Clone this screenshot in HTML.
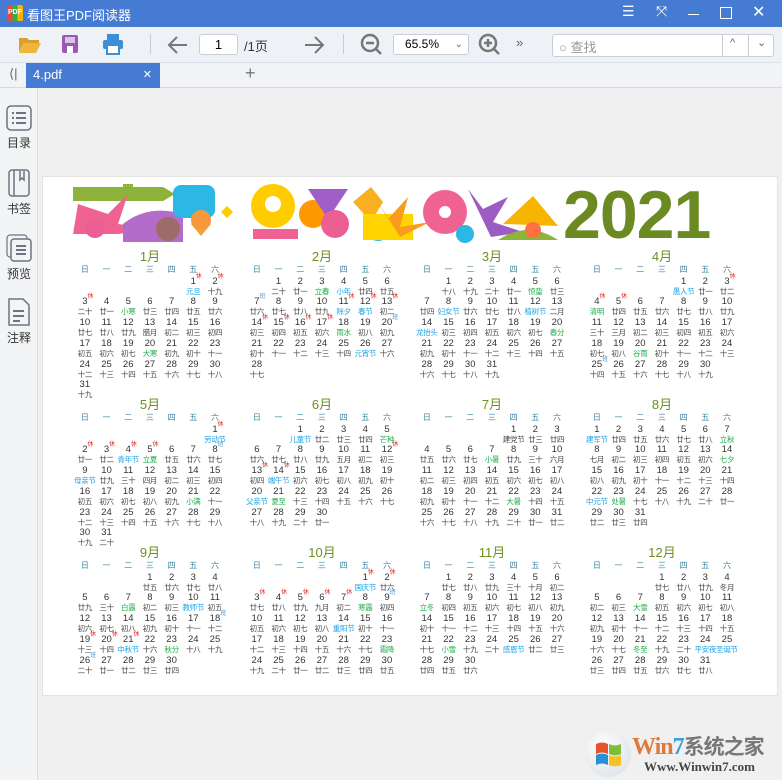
<!DOCTYPE html>
<html><head><meta charset="utf-8"><style>
*{margin:0;padding:0;box-sizing:border-box}
body{width:782px;height:780px;overflow:hidden;background:#f0f0f0;font-family:"Liberation Sans","Noto Sans CJK SC",sans-serif;position:relative}
.tb{position:absolute;left:0;top:0;width:782px;height:27px;background:#467bd3;color:#fff;font-size:14px}
.tool{position:absolute;left:0;top:27px;width:782px;height:36px;background:#eef2f7;border-bottom:1px solid #dde2ea}
.tabs{position:absolute;left:0;top:63px;width:782px;height:25px;background:#f1f3f6;border-bottom:1px solid #d6dae0}
.side{position:absolute;left:0;top:88px;width:38px;height:692px;background:#f3f4f6;border-right:1px solid #d9dce1}
.side div{position:absolute;left:0;width:38px;text-align:center;font-size:12px;color:#333}
.page{position:absolute;left:42px;top:176px;width:736px;height:520px;background:#fff;border:1px solid #e2e2e2}
.m{position:absolute;width:152px;font-size:9.5px;color:#333}
.m h3{height:14px;line-height:14px;text-align:center;font-weight:normal;font-size:13px;color:#6f8f22}
.w,.g{display:grid;grid-template-columns:repeat(7,21.7px)}
.w span{height:12px;line-height:12px;text-align:center;color:#3a86a3;font-size:8px}
.g i{font-style:normal;text-align:center;height:20.8px;line-height:9px;padding-top:0.5px;position:relative}
.g i b,.g i u,.g i em{display:block;font-weight:normal;text-decoration:none;font-style:normal;font-size:7.5px;line-height:11.5px;color:#444;white-space:nowrap;letter-spacing:-.3px}
.g i u{color:#1aa3e8}.g i em{color:#1fae4a}
.g i sup{display:inline-block;width:0;overflow:visible;vertical-align:top;margin-top:-3px;font-size:6px;color:#e02020;line-height:6px;text-align:left}
.g i sup.c{color:#4a9ad8}
.ic{position:absolute;top:34px}
</style></head><body>
<div class="tb">
<div style="position:absolute;left:7px;top:5px;width:16px;height:16px;background:linear-gradient(90deg,#e94b3c 33%,#2fae4e 33% 66%,#f6b400 66%);border-radius:2px;font-size:7px;color:#fff;text-align:center;line-height:16px;font-weight:bold">PDF</div>
<div style="position:absolute;left:27px;top:5px;font-size:13px">看图王PDF阅读器</div>
<div style="position:absolute;left:622px;top:3px;font-size:14px">☰</div>
<div style="position:absolute;left:656px;top:3px;font-size:14px">⤧</div>
<div style="position:absolute;left:688px;top:14px;width:11px;height:1px;background:#fff"></div>
<div style="position:absolute;left:720px;top:7px;width:12px;height:12px;border:1.5px solid #fff"></div>
<div style="position:absolute;left:752px;top:2px;font-size:16px">✕</div>
</div>
<div class="tool">
<svg class="ic" style="left:18px;top:7px" width="24" height="20"><path d="M1 4h8l2 2h10v3H6L1 18z" fill="#d8a02a"/><path d="M6 9h17l-5 10H1z" fill="#f0b63a"/></svg>
<svg class="ic" style="left:61px;top:7px" width="18" height="20"><rect x="1" y="1" width="16" height="18" rx="2" fill="#9b59b6"/><rect x="4" y="3" width="10" height="6" fill="#d9c5e3"/><rect x="6" y="12" width="6" height="7" fill="#fff"/></svg>
<svg class="ic" style="left:102px;top:6px" width="22" height="22"><rect x="5" y="1" width="12" height="6" fill="#3b8fd6"/><rect x="1" y="7" width="20" height="9" rx="2" fill="#3b8fd6"/><rect x="5" y="12" width="12" height="9" fill="#fff" stroke="#3b8fd6" stroke-width="2"/></svg>
<div style="position:absolute;left:150px;top:7px;width:1px;height:20px;background:#ccc"></div>
<svg class="ic" style="left:167px;top:8px" width="22" height="20"><path d="M20 10H3M10 2 2 10l8 8" stroke="#777" stroke-width="2" fill="none"/></svg>
<div style="position:absolute;left:199px;top:7px;width:39px;height:21px;border:1px solid #c9ced6;border-radius:3px;background:#fff;text-align:center;line-height:19px;font-size:13px">1</div>
<div style="position:absolute;left:244px;top:9px;font-size:13px;color:#333">/1页</div>
<svg class="ic" style="left:303px;top:8px" width="22" height="20"><path d="M2 10h17M12 2l8 8-8 8" stroke="#777" stroke-width="2" fill="none"/></svg>
<div style="position:absolute;top:7px;width:1px;height:20px;background:#ccc;left:343px"></div>
<svg class="ic" style="left:360px;top:6px" width="24" height="24"><circle cx="10" cy="10" r="8" stroke="#777" stroke-width="2.5" fill="none"/><path d="M6 10h8M16 16l5 5" stroke="#777" stroke-width="2.5"/></svg>
<div style="position:absolute;left:393px;top:7px;width:76px;height:21px;border:1px solid #c9ced6;border-radius:3px;background:#fff;font-size:12px;line-height:19px;padding-left:11px">65.5% <span style="position:absolute;right:5px;color:#666;font-size:10px">⌄</span></div>
<svg class="ic" style="left:478px;top:6px" width="24" height="24"><circle cx="10" cy="10" r="8" stroke="#777" stroke-width="2.5" fill="none"/><path d="M6 10h8M10 6v8M16 16l5 5" stroke="#777" stroke-width="2.5"/></svg>
<div style="position:absolute;left:516px;top:8px;font-size:13px;color:#666">»</div>
<div style="position:absolute;left:552px;top:7px;width:222px;height:23px;border:1px solid #c9ced6;border-radius:3px;background:#fff">
<span style="position:absolute;left:6px;top:2px;font-size:13px;color:#999">○ 查找</span>
<span style="position:absolute;left:169px;top:0;width:1px;height:21px;background:#ccc"></span>
<span style="position:absolute;left:177px;top:2px;font-size:11px;color:#666">^</span>
<span style="position:absolute;left:195px;top:0;width:1px;height:21px;background:#ccc"></span>
<span style="position:absolute;left:204px;top:1px;font-size:11px;color:#666">⌄</span>
</div>
</div>
<div class="tabs">
<div style="position:absolute;left:9px;top:3px;font-size:13px;color:#666">⟨|</div>
<div style="position:absolute;left:26px;top:0;width:134px;height:25px;background:#467bd3;color:#fff;font-size:13px;line-height:24px;padding-left:7px">4.pdf<span style="position:absolute;right:8px;font-size:11px">✕</span></div>
<div style="position:absolute;left:245px;top:0;font-size:18px;color:#777">+</div>
</div>
<div class="side">
<div style="top:17px"><svg width="26" height="26"><rect x="1" y="1" width="24" height="24" rx="4" fill="none" stroke="#6b7480" stroke-width="1.5"/><path d="M6 8h2M10 8h10M6 13h2M10 13h10M6 18h2M10 18h10" stroke="#6b7480" stroke-width="2"/></svg><br>目录</div>
<div style="top:81px"><svg width="26" height="28"><rect x="3" y="1" width="20" height="26" rx="3" fill="none" stroke="#6b7480" stroke-width="1.5"/><path d="M8 1v26M14 2v9l2-2 2 2V2" stroke="#6b7480" stroke-width="1.5" fill="none"/></svg><br>书签</div>
<div style="top:146px"><svg width="26" height="28"><rect x="1" y="1" width="20" height="22" rx="3" fill="none" stroke="#6b7480" stroke-width="1.2"/><rect x="5" y="5" width="20" height="22" rx="3" fill="#f3f4f6" stroke="#6b7480" stroke-width="1.5"/><path d="M10 12h10M10 16h10M10 20h10" stroke="#6b7480" stroke-width="2"/></svg><br>预览</div>
<div style="top:210px"><svg width="26" height="28"><path d="M3 1h14l6 6v20H3z" fill="none" stroke="#6b7480" stroke-width="1.5"/><path d="M7 13h11M7 18h11M7 23h7" stroke="#6b7480" stroke-width="2"/></svg><br>注释</div>
</div>
<div class="page"></div>
<svg style="position:absolute;left:73px;top:184px" width="490" height="60">
<path d="M0 3h50v-3h10v3h30l12 7-12 7H0z" fill="#8db33a"/>
<path d="M5 20l30 10 20-20-10 30 40 5-40 5H0z" fill="#f06292"/>
<circle cx="22" cy="44" r="10" fill="#ec5f95"/>
<path d="M50 40 Q75 20 110 30 L110 58 H50z" fill="#b36cc9"/>
<rect x="100" y="1" width="42" height="33" rx="8" fill="#2bb8e5"/>
<circle cx="95" cy="45" r="12" fill="#8d6a2a" opacity=".6"/>
<path d="M118 40 l10-12 10 12-10 12z" fill="#f5a03a"/>
<circle cx="128" cy="36" r="10" fill="#f7993a"/>
<path d="M148 28l6-6 6 6-6 6z" fill="#ffcc00"/>
<circle cx="200" cy="22" r="22" fill="#ffcc00"/><circle cx="200" cy="20" r="8" fill="#fff"/>
<path d="M180 45h45v10h-45z" fill="#f06292"/>
<circle cx="240" cy="30" r="14" fill="#ff9900"/>
<path d="M235 5 l40 0 -20 30z" fill="#a05ec9"/>
<circle cx="262" cy="40" r="14" fill="#ec5f95"/>
<path d="M280 18l18-15 12 15-12 20z" fill="#f8b020"/>
<circle cx="305" cy="45" r="12" fill="#2bb8e5"/>
<path d="M290 30 h50 v26 h-50z" fill="#ffd400"/>
<path d="M300 10 l15 25 20-22-8 30 30-5-30 15z" fill="#fa9c1b"/>
<circle cx="372" cy="28" r="22" fill="#f06292"/><circle cx="372" cy="28" r="6" fill="#fff"/>
<path d="M395 5 l15 20 25-12-15 25 30 10-32 5z" fill="#9c5cc4"/>
<circle cx="392" cy="50" r="9" fill="#2bb8e5"/>
<path d="M430 40 l30-28 25 30z" fill="#f7b500"/>
<path d="M425 56 q30-20 60 0z" fill="#8db33a"/>
<circle cx="460" cy="46" r="8" fill="#ff7043"/>
</svg>
<div style="position:absolute;left:563px;top:176px;font-size:68px;font-weight:bold;color:#6b8a22;letter-spacing:-1px">2021</div>

<div class="m" style="left:74px;top:250px"><h3>1月</h3><div class="w"><span>日</span><span>一</span><span>二</span><span>三</span><span>四</span><span>五</span><span>六</span></div><div class="g">
<i style="grid-column-start:6">1<sup>休</sup><u>元旦</u></i><i>2<sup>休</sup><b>十九</b></i><i>3<sup>休</sup><b>二十</b></i><i>4<b>廿一</b></i><i>5<em>小寒</em></i><i>6<b>廿三</b></i><i>7<b>廿四</b></i><i>8<b>廿五</b></i><i>9<b>廿六</b></i><i>10<b>廿七</b></i><i>11<b>廿八</b></i><i>12<b>廿九</b></i><i>13<b>腊月</b></i><i>14<b>初二</b></i><i>15<b>初三</b></i><i>16<b>初四</b></i><i>17<b>初五</b></i><i>18<b>初六</b></i><i>19<b>初七</b></i><i>20<em>大寒</em></i><i>21<b>初九</b></i><i>22<b>初十</b></i><i>23<b>十一</b></i><i>24<b>十二</b></i><i>25<b>十三</b></i><i>26<b>十四</b></i><i>27<b>十五</b></i><i>28<b>十六</b></i><i>29<b>十七</b></i><i>30<b>十八</b></i><i>31<b>十九</b></i></div></div>

<div class="m" style="left:246px;top:250px"><h3>2月</h3><div class="w"><span>日</span><span>一</span><span>二</span><span>三</span><span>四</span><span>五</span><span>六</span></div><div class="g">
<i style="grid-column-start:2">1<b>二十</b></i><i>2<b>廿一</b></i><i>3<em>立春</em></i><i>4<u>小年</u></i><i>5<b>廿四</b></i><i>6<b>廿五</b></i><i>7<sup class="c">班</sup><b>廿六</b></i><i>8<b>廿七</b></i><i>9<b>廿八</b></i><i>10<b>廿九</b></i><i>11<sup>休</sup><u>除夕</u></i><i>12<sup>休</sup><u>春节</u></i><i>13<sup>休</sup><b>初二</b></i><i>14<sup>休</sup><b>初三</b></i><i>15<sup>休</sup><b>初四</b></i><i>16<sup>休</sup><b>初五</b></i><i>17<sup>休</sup><b>初六</b></i><i>18<em>雨水</em></i><i>19<b>初八</b></i><i>20<sup class="c">班</sup><b>初九</b></i><i>21<b>初十</b></i><i>22<b>十一</b></i><i>23<b>十二</b></i><i>24<b>十三</b></i><i>25<b>十四</b></i><i>26<u>元宵节</u></i><i>27<b>十六</b></i><i>28<b>十七</b></i></div></div>

<div class="m" style="left:416px;top:250px"><h3>3月</h3><div class="w"><span>日</span><span>一</span><span>二</span><span>三</span><span>四</span><span>五</span><span>六</span></div><div class="g">
<i style="grid-column-start:2">1<b>十八</b></i><i>2<b>十九</b></i><i>3<b>二十</b></i><i>4<b>廿一</b></i><i>5<em>惊蛰</em></i><i>6<b>廿三</b></i><i>7<b>廿四</b></i><i>8<u>妇女节</u></i><i>9<b>廿六</b></i><i>10<b>廿七</b></i><i>11<b>廿八</b></i><i>12<u>植树节</u></i><i>13<b>二月</b></i><i>14<u>龙抬头</u></i><i>15<b>初三</b></i><i>16<b>初四</b></i><i>17<b>初五</b></i><i>18<b>初六</b></i><i>19<b>初七</b></i><i>20<em>春分</em></i><i>21<b>初九</b></i><i>22<b>初十</b></i><i>23<b>十一</b></i><i>24<b>十二</b></i><i>25<b>十三</b></i><i>26<b>十四</b></i><i>27<b>十五</b></i><i>28<b>十六</b></i><i>29<b>十七</b></i><i>30<b>十八</b></i><i>31<b>十九</b></i></div></div>

<div class="m" style="left:586px;top:250px"><h3>4月</h3><div class="w"><span>日</span><span>一</span><span>二</span><span>三</span><span>四</span><span>五</span><span>六</span></div><div class="g">
<i style="grid-column-start:5">1<u>愚人节</u></i><i>2<b>廿一</b></i><i>3<sup>休</sup><b>廿二</b></i><i>4<sup>休</sup><em>清明</em></i><i>5<sup>休</sup><b>廿四</b></i><i>6<b>廿五</b></i><i>7<b>廿六</b></i><i>8<b>廿七</b></i><i>9<b>廿八</b></i><i>10<b>廿九</b></i><i>11<b>三十</b></i><i>12<b>三月</b></i><i>13<b>初二</b></i><i>14<b>初三</b></i><i>15<b>初四</b></i><i>16<b>初五</b></i><i>17<b>初六</b></i><i>18<b>初七</b></i><i>19<b>初八</b></i><i>20<em>谷雨</em></i><i>21<b>初十</b></i><i>22<b>十一</b></i><i>23<b>十二</b></i><i>24<b>十三</b></i><i>25<sup class="c">班</sup><b>十四</b></i><i>26<b>十五</b></i><i>27<b>十六</b></i><i>28<b>十七</b></i><i>29<b>十八</b></i><i>30<b>十九</b></i></div></div>

<div class="m" style="left:74px;top:398px"><h3>5月</h3><div class="w"><span>日</span><span>一</span><span>二</span><span>三</span><span>四</span><span>五</span><span>六</span></div><div class="g">
<i style="grid-column-start:7">1<sup>休</sup><u>劳动节</u></i><i>2<sup>休</sup><b>廿一</b></i><i>3<sup>休</sup><b>廿二</b></i><i>4<sup>休</sup><u>青年节</u></i><i>5<sup>休</sup><em>立夏</em></i><i>6<b>廿五</b></i><i>7<b>廿六</b></i><i>8<sup class="c">班</sup><b>廿七</b></i><i>9<u>母亲节</u></i><i>10<b>廿九</b></i><i>11<b>三十</b></i><i>12<b>四月</b></i><i>13<b>初二</b></i><i>14<b>初三</b></i><i>15<b>初四</b></i><i>16<b>初五</b></i><i>17<b>初六</b></i><i>18<b>初七</b></i><i>19<b>初八</b></i><i>20<b>初九</b></i><i>21<em>小满</em></i><i>22<b>十一</b></i><i>23<b>十二</b></i><i>24<b>十三</b></i><i>25<b>十四</b></i><i>26<b>十五</b></i><i>27<b>十六</b></i><i>28<b>十七</b></i><i>29<b>十八</b></i><i>30<b>十九</b></i><i>31<b>二十</b></i></div></div>

<div class="m" style="left:246px;top:398px"><h3>6月</h3><div class="w"><span>日</span><span>一</span><span>二</span><span>三</span><span>四</span><span>五</span><span>六</span></div><div class="g">
<i style="grid-column-start:3">1<u>儿童节</u></i><i>2<b>廿二</b></i><i>3<b>廿三</b></i><i>4<b>廿四</b></i><i>5<em>芒种</em></i><i>6<b>廿六</b></i><i>7<b>廿七</b></i><i>8<b>廿八</b></i><i>9<b>廿九</b></i><i>10<b>五月</b></i><i>11<b>初二</b></i><i>12<sup>休</sup><b>初三</b></i><i>13<sup>休</sup><b>初四</b></i><i>14<sup>休</sup><u>端午节</u></i><i>15<b>初六</b></i><i>16<b>初七</b></i><i>17<b>初八</b></i><i>18<b>初九</b></i><i>19<b>初十</b></i><i>20<u>父亲节</u></i><i>21<em>夏至</em></i><i>22<b>十三</b></i><i>23<b>十四</b></i><i>24<b>十五</b></i><i>25<b>十六</b></i><i>26<b>十七</b></i><i>27<b>十八</b></i><i>28<b>十九</b></i><i>29<b>二十</b></i><i>30<b>廿一</b></i></div></div>

<div class="m" style="left:416px;top:398px"><h3>7月</h3><div class="w"><span>日</span><span>一</span><span>二</span><span>三</span><span>四</span><span>五</span><span>六</span></div><div class="g">
<i style="grid-column-start:5">1<b>建党节</b></i><i>2<b>廿三</b></i><i>3<b>廿四</b></i><i>4<b>廿五</b></i><i>5<b>廿六</b></i><i>6<b>廿七</b></i><i>7<em>小暑</em></i><i>8<b>廿九</b></i><i>9<b>三十</b></i><i>10<b>六月</b></i><i>11<b>初二</b></i><i>12<b>初三</b></i><i>13<b>初四</b></i><i>14<b>初五</b></i><i>15<b>初六</b></i><i>16<b>初七</b></i><i>17<b>初八</b></i><i>18<b>初九</b></i><i>19<b>初十</b></i><i>20<b>十一</b></i><i>21<b>十二</b></i><i>22<em>大暑</em></i><i>23<b>十四</b></i><i>24<b>十五</b></i><i>25<b>十六</b></i><i>26<b>十七</b></i><i>27<b>十八</b></i><i>28<b>十九</b></i><i>29<b>二十</b></i><i>30<b>廿一</b></i><i>31<b>廿二</b></i></div></div>

<div class="m" style="left:586px;top:398px"><h3>8月</h3><div class="w"><span>日</span><span>一</span><span>二</span><span>三</span><span>四</span><span>五</span><span>六</span></div><div class="g">
<i>1<u>建军节</u></i><i>2<b>廿四</b></i><i>3<b>廿五</b></i><i>4<b>廿六</b></i><i>5<b>廿七</b></i><i>6<b>廿八</b></i><i>7<em>立秋</em></i><i>8<b>七月</b></i><i>9<b>初二</b></i><i>10<b>初三</b></i><i>11<b>初四</b></i><i>12<b>初五</b></i><i>13<b>初六</b></i><i>14<em>七夕</em></i><i>15<b>初八</b></i><i>16<b>初九</b></i><i>17<b>初十</b></i><i>18<b>十一</b></i><i>19<b>十二</b></i><i>20<b>十三</b></i><i>21<b>十四</b></i><i>22<u>中元节</u></i><i>23<em>处暑</em></i><i>24<b>十七</b></i><i>25<b>十八</b></i><i>26<b>十九</b></i><i>27<b>二十</b></i><i>28<b>廿一</b></i><i>29<b>廿二</b></i><i>30<b>廿三</b></i><i>31<b>廿四</b></i></div></div>

<div class="m" style="left:74px;top:546px"><h3>9月</h3><div class="w"><span>日</span><span>一</span><span>二</span><span>三</span><span>四</span><span>五</span><span>六</span></div><div class="g">
<i style="grid-column-start:4">1<b>廿五</b></i><i>2<b>廿六</b></i><i>3<b>廿七</b></i><i>4<b>廿八</b></i><i>5<b>廿九</b></i><i>6<b>三十</b></i><i>7<em>白露</em></i><i>8<b>初二</b></i><i>9<b>初三</b></i><i>10<u>教师节</u></i><i>11<b>初五</b></i><i>12<b>初六</b></i><i>13<b>初七</b></i><i>14<b>初八</b></i><i>15<b>初九</b></i><i>16<b>初十</b></i><i>17<b>十一</b></i><i>18<sup class="c">班</sup><b>十二</b></i><i>19<sup>休</sup><b>十三</b></i><i>20<sup>休</sup><b>十四</b></i><i>21<sup>休</sup><u>中秋节</u></i><i>22<b>十六</b></i><i>23<em>秋分</em></i><i>24<b>十八</b></i><i>25<b>十九</b></i><i>26<sup class="c">班</sup><b>二十</b></i><i>27<b>廿一</b></i><i>28<b>廿二</b></i><i>29<b>廿三</b></i><i>30<b>廿四</b></i></div></div>

<div class="m" style="left:246px;top:546px"><h3>10月</h3><div class="w"><span>日</span><span>一</span><span>二</span><span>三</span><span>四</span><span>五</span><span>六</span></div><div class="g">
<i style="grid-column-start:6">1<sup>休</sup><u>国庆节</u></i><i>2<sup>休</sup><b>廿六</b></i><i>3<sup>休</sup><b>廿七</b></i><i>4<sup>休</sup><b>廿八</b></i><i>5<sup>休</sup><b>廿九</b></i><i>6<sup>休</sup><b>九月</b></i><i>7<sup>休</sup><b>初二</b></i><i>8<em>寒露</em></i><i>9<sup class="c">班</sup><b>初四</b></i><i>10<b>初五</b></i><i>11<b>初六</b></i><i>12<b>初七</b></i><i>13<b>初八</b></i><i>14<u>重阳节</u></i><i>15<b>初十</b></i><i>16<b>十一</b></i><i>17<b>十二</b></i><i>18<b>十三</b></i><i>19<b>十四</b></i><i>20<b>十五</b></i><i>21<b>十六</b></i><i>22<b>十七</b></i><i>23<em>霜降</em></i><i>24<b>十九</b></i><i>25<b>二十</b></i><i>26<b>廿一</b></i><i>27<b>廿二</b></i><i>28<b>廿三</b></i><i>29<b>廿四</b></i><i>30<b>廿五</b></i></div></div>

<div class="m" style="left:416px;top:546px"><h3>11月</h3><div class="w"><span>日</span><span>一</span><span>二</span><span>三</span><span>四</span><span>五</span><span>六</span></div><div class="g">
<i style="grid-column-start:2">1<b>廿七</b></i><i>2<b>廿八</b></i><i>3<b>廿九</b></i><i>4<b>三十</b></i><i>5<b>十月</b></i><i>6<b>初二</b></i><i>7<em>立冬</em></i><i>8<b>初四</b></i><i>9<b>初五</b></i><i>10<b>初六</b></i><i>11<b>初七</b></i><i>12<b>初八</b></i><i>13<b>初九</b></i><i>14<b>初十</b></i><i>15<b>十一</b></i><i>16<b>十二</b></i><i>17<b>十三</b></i><i>18<b>十四</b></i><i>19<b>十五</b></i><i>20<b>十六</b></i><i>21<b>十七</b></i><i>22<em>小雪</em></i><i>23<b>十九</b></i><i>24<b>二十</b></i><i>25<u>感恩节</u></i><i>26<b>廿二</b></i><i>27<b>廿三</b></i><i>28<b>廿四</b></i><i>29<b>廿五</b></i><i>30<b>廿六</b></i></div></div>

<div class="m" style="left:586px;top:546px"><h3>12月</h3><div class="w"><span>日</span><span>一</span><span>二</span><span>三</span><span>四</span><span>五</span><span>六</span></div><div class="g">
<i style="grid-column-start:4">1<b>廿七</b></i><i>2<b>廿八</b></i><i>3<b>廿九</b></i><i>4<b>冬月</b></i><i>5<b>初二</b></i><i>6<b>初三</b></i><i>7<em>大雪</em></i><i>8<b>初五</b></i><i>9<b>初六</b></i><i>10<b>初七</b></i><i>11<b>初八</b></i><i>12<b>初九</b></i><i>13<b>初十</b></i><i>14<b>十一</b></i><i>15<b>十二</b></i><i>16<b>十三</b></i><i>17<b>十四</b></i><i>18<b>十五</b></i><i>19<b>十六</b></i><i>20<b>十七</b></i><i>21<em>冬至</em></i><i>22<b>十九</b></i><i>23<b>二十</b></i><i>24<u>平安夜</u></i><i>25<u>圣诞节</u></i><i>26<b>廿三</b></i><i>27<b>廿四</b></i><i>28<b>廿五</b></i><i>29<b>廿六</b></i><i>30<b>廿七</b></i><i>31<b>廿八</b></i></div></div>

<div style="position:absolute;left:585px;top:731px;width:46px;height:46px;border-radius:50%;background:radial-gradient(circle at 40% 35%,#fff,#d8dde2)"></div>
<svg style="position:absolute;left:594px;top:740px" width="30" height="28"><path d="M2 4q6-3 12 0v10q-6-3-12 0z" fill="#e8542a"/><path d="M15 4q6 3 12 0v10q-6 3-12 0z" fill="#7bbf3a"/><path d="M2 15q6-3 12 0v10q-6-3-12 0z" fill="#2b8fd6"/><path d="M15 15q6 3 12 0v10q-6 3-12 0z" fill="#f6c12a"/></svg>
<div style="position:absolute;left:632px;top:731px;font-size:24px;font-weight:bold;font-family:'Liberation Serif',serif;color:#e07a3a;letter-spacing:-1px">Win<span style="color:#3aa0d8">7</span><span style="color:#777;font-family:'Noto Sans CJK SC',sans-serif;font-size:21px">系统之家</span></div>
<div style="position:absolute;left:644px;top:759px;font-size:13px;font-weight:bold;font-family:'Liberation Serif',serif;color:#444">Www.Winwin7.com</div>
</body></html>
